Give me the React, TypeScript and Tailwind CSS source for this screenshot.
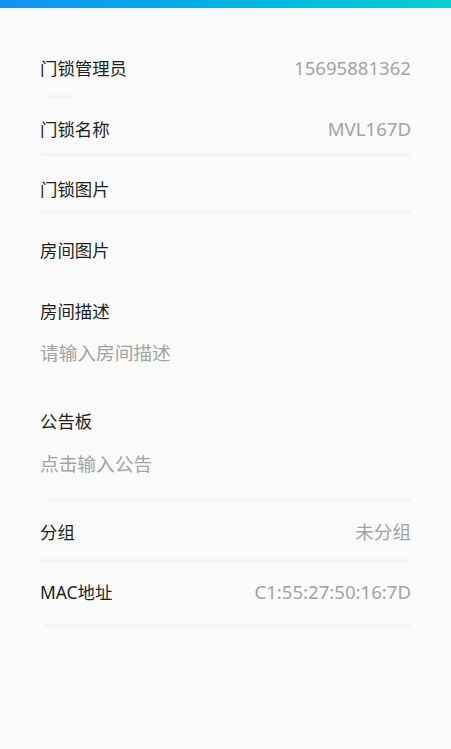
import React from "react";

const font = { fontFamily: '"Noto Sans", "Noto Sans CJK SC", sans-serif' };

function Row({ label, value, className }: { label: string; value?: string; className: string }) {
  return (
    <div className={`flex h-6 items-center justify-between ${className}`}>
      <span className="text-[17.4px] text-[#1f1f1f]">{label}</span>
      {value && <span className="text-[18.6px] text-[#a3a3a3]">{value}</span>}
    </div>
  );
}

function Divider({ className }: { className: string }) {
  return <div className={`h-[3px] rounded-full bg-[#f4f4f4] ${className}`} />;
}

export default function App() {
  return (
    <div className="min-h-[749px] w-[451px] bg-[#fafafa]" style={font}>
      <div className="h-2 bg-gradient-to-r from-[#1690f2] to-[#0bcfcf]" />
      <div className="h-[3px] bg-gradient-to-b from-[#dff8fc] to-[#fafafa]" />

      <div className="flex flex-col px-10">
        <Row label="门锁管理员" value="15695881362" className="mt-[45px]" />
        <Divider className="mt-[15px] ml-2 w-6" />

        <Row label="门锁名称" value="MVL167D" className="mt-[19px]" />
        <Divider className="mt-3" />

        <Row label="门锁图片" className="mt-[21px]" />
        <Divider className="mt-[10px]" />

        <Row label="房间图片" className="mt-6" />

        <Row label="房间描述" className="mt-[37px]" />
        <div className="mt-[18px] flex h-6 items-center text-[18.7px] text-[#a3a3a3]">请输入房间描述</div>

        <Row label="公告板" className="mt-[44px]" />
        <div className="mt-[19px] flex h-6 items-center text-[18.7px] text-[#a3a3a3]">点击输入公告</div>
        <Divider className="mt-[22px] ml-2" />

        <Row label="分组" value="未分组" className="mt-[19px]" />
        <Divider className="mt-[15px]" />

        <Row label="MAC地址" value="C1:55:27:50:16:7D" className="mt-[18px]" />
        <Divider className="mt-5 ml-1" />
      </div>
    </div>
  );
}
